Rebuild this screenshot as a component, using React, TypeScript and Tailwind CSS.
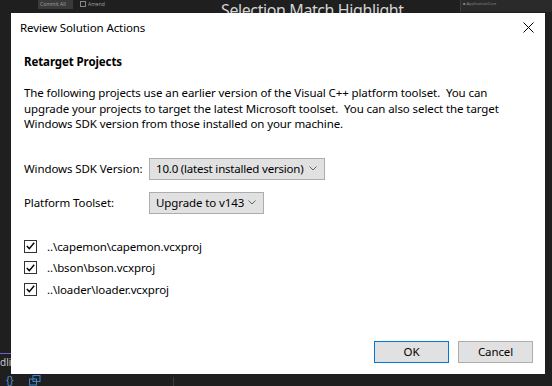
import React from "react";

const font = { fontFamily: '"Segoe UI", "Noto Sans", "Open Sans", sans-serif' };

const Chevron = () => (
  <svg width="8" height="5" viewBox="0 0 8 5" className="ml-auto shrink-0">
    <path d="M0.5 0.5 L4 4 L7.5 0.5" fill="none" stroke="#606060" strokeWidth="1" />
  </svg>
);

const CheckRow = ({ label }: { label: string }) => (
  <div className="flex items-center h-[21.5px]">
    <div className="w-[13px] h-[13px] border border-[#333333] bg-white flex items-center justify-center">
      <svg width="9" height="8" viewBox="0 0 9 8">
        <path d="M0.8 4 L3.3 6.6 L8.2 0.8" fill="none" stroke="#000" strokeWidth="1.4" />
      </svg>
    </div>
    <span className="ml-[10px] whitespace-nowrap">{label}</span>
  </div>
);

const App = () => {
  return (
    <div
      className="relative w-[552px] h-[386px] overflow-hidden bg-[#1f1f1f]"
      style={font}
    >
      {/* editor chrome behind the dialog */}
      <div className="absolute left-[38px] top-0 h-[9px] w-[35px] bg-[#3a3a3a] text-[5px] text-[#9a9a9a] px-[2px] leading-[8px]">
        Commit All
      </div>
      <div className="absolute left-[80px] top-[1px] w-[6px] h-[6px] border border-[#888]" />
      <div className="absolute left-[88px] top-0 text-[5px] leading-[8px] text-[#9a9a9a]">Amend</div>
      <div className="absolute left-[221px] top-0 text-[16px] leading-[20px] tracking-[-0.4px] text-[#d4d4d4] whitespace-nowrap">
        Selection Match Highlight
      </div>
      <div className="absolute left-[460px] top-0 w-[92px] h-[12px] bg-[#2a2a2a] border-l border-[#3c3c3c]">
        <div className="ml-[2px] mt-[1px] text-[4px] text-[#888] leading-[6px]">■ ApplicationCore</div>
      </div>
      <div className="absolute left-0 top-[353px] w-[11px] h-[1px] bg-[#7160c8]" />
      <div className="absolute left-0 top-[356px] text-[10px] text-[#c8c8c8] leading-[12px]">dlin</div>
      <div className="absolute left-[6px] top-[375px] text-[10px] text-[#5b8fd6] leading-[11px]">{"{}"}</div>
      <svg className="absolute left-[29px] top-[375px]" width="12" height="11" viewBox="0 0 12 11">
        <rect x="4" y="0.5" width="7" height="6" fill="none" stroke="#3d86d6" />
        <rect x="0.5" y="4" width="7" height="6" fill="none" stroke="#3d86d6" />
      </svg>
      <div className="absolute left-[173px] top-[377px] w-[1px] h-[9px] bg-[#3c3c3c]" />

      {/* dialog */}
      <div className="absolute left-[11px] top-[13px] w-[534px] h-[361px] bg-white flex flex-col text-[11.5px] tracking-[-0.1px] text-black">
        <div className="h-[29px] flex items-center pl-[9px] pr-[11px]">
          <span className="whitespace-nowrap">Review Solution Actions</span>
          <svg className="ml-auto" width="11" height="11" viewBox="0 0 11 11">
            <path d="M0.5 0.5 L10.5 10.5 M10.5 0.5 L0.5 10.5" stroke="#000" strokeWidth="1" />
          </svg>
        </div>

        <div className="flex flex-col pl-[13px] pr-[12px] pt-[12px] flex-1">
          <div className="font-bold leading-[16px]">Retarget Projects</div>

          <p className="mt-[15px] leading-[15.5px] whitespace-pre">
            {"The following projects use an earlier version of the Visual C++ platform toolset.  You can\nupgrade your projects to target the latest Microsoft toolset.  You can also select the target\nWindows SDK version from those installed on your machine."}
          </p>

          <div className="mt-[26px] flex items-center">
            <span className="w-[125px] shrink-0 whitespace-nowrap">Windows SDK Version:</span>
            <div className="w-[176px] h-[22px] shrink-0 bg-[#e1e1e1] border border-[#adadad] flex items-center pl-[6px] pr-[7px] whitespace-nowrap tracking-[-0.2px]">
              10.0 (latest installed version)
              <Chevron />
            </div>
          </div>

          <div className="mt-[12px] flex items-center">
            <span className="w-[125px] shrink-0 whitespace-nowrap">Platform Toolset:</span>
            <div className="w-[115px] h-[22px] shrink-0 bg-[#e1e1e1] border border-[#adadad] flex items-center pl-[6px] pr-[7px] whitespace-nowrap">
              Upgrade to v143
              <Chevron />
            </div>
          </div>

          <div className="mt-[22px] flex flex-col">
            <CheckRow label="..\capemon\capemon.vcxproj" />
            <CheckRow label="..\bson\bson.vcxproj" />
            <CheckRow label="..\loader\loader.vcxproj" />
          </div>

          <div className="mt-auto mb-[11px] flex justify-end gap-[9px]">
            <button className="w-[75px] h-[22px] bg-[#e1e1e1] border border-[#0078d7]">
              OK
            </button>
            <button className="w-[75px] h-[22px] bg-[#e1e1e1] border border-[#adadad]">
              Cancel
            </button>
          </div>
        </div>
      </div>
    </div>
  );
};

export default App;
